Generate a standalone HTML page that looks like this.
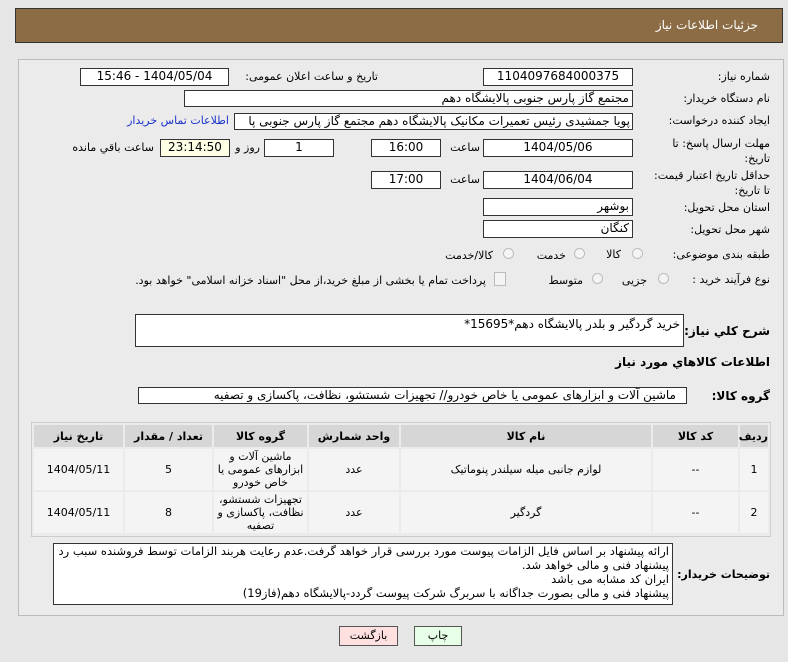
<!DOCTYPE html>
<html><head><meta charset="utf-8"><style>
body{margin:0;width:788px;height:662px;background:#e6e6e6;font-family:"DejaVu Sans","Liberation Sans",sans-serif;font-size:11px;color:#000;position:relative;overflow:hidden;direction:rtl}
.a{position:absolute;white-space:nowrap}
.b{position:absolute;background:#fff;border:1px solid #333;box-sizing:border-box;text-align:center;line-height:15px;font-size:12px;white-space:nowrap;overflow:hidden}
.l{position:absolute;white-space:nowrap;text-align:right}
.r{position:absolute;width:11px;height:11px;border-radius:50%;border:1px solid #bbb;background:#f4f4f4;box-sizing:border-box}
table{border-collapse:separate;border-spacing:2px;font-size:11px;white-space:normal}
td,th{text-align:center;padding:0}
th{background:#d6d6d6;height:22px;font-weight:bold}
td{background:#f4f4f4}
</style></head><body>
<div class="a" style="left:15px;top:8px;width:768px;height:35px;background:#8b6c45;border:1px solid #333;box-sizing:border-box"></div>
<div class="l" style="right:30px;top:18px;color:#fff;font-size:12px">جزئیات اطلاعات نیاز</div>
<div class="a" style="left:18px;top:59px;width:766px;height:557px;border:1px solid #bbb;background:#ebebeb;box-sizing:border-box"></div>

<div class="l" style="right:18px;top:70px">شماره نیاز:</div>
<div class="b" style="left:483px;top:68px;width:150px;height:18px">1104097684000375</div>
<div class="l" style="right:410px;top:70px">تاریخ و ساعت اعلان عمومی:</div>
<div class="b" style="left:80px;top:68px;width:149px;height:18px">1404/05/04 - 15:46</div>

<div class="l" style="right:18px;top:92px">نام دستگاه خریدار:</div>
<div class="b" style="left:184px;top:90px;width:449px;height:17px;text-align:right;padding-right:3px">مجتمع گاز پارس جنوبی  پالایشگاه دهم</div>

<div class="l" style="right:18px;top:114px">ایجاد کننده درخواست:</div>
<div class="b" style="left:234px;top:113px;width:399px;height:17px;text-align:right;padding-right:2px">پویا جمشیدی رئیس تعمیرات مکانیک پالایشگاه دهم  مجتمع گاز پارس جنوبی  پا</div>
<div class="l" style="right:559px;top:114px;color:#1a33cc">اطلاعات تماس خریدار</div>

<div class="l" style="right:18px;top:136px;line-height:15px">مهلت ارسال پاسخ: تا<br>تاریخ:</div>
<div class="b" style="left:483px;top:139px;width:150px;height:18px">1404/05/06</div>
<div class="l" style="right:308px;top:141px">ساعت</div>
<div class="b" style="left:371px;top:139px;width:70px;height:18px">16:00</div>
<div class="b" style="left:264px;top:139px;width:70px;height:18px">1</div>
<div class="l" style="right:528px;top:141px">روز و</div>
<div class="b" style="left:160px;top:139px;width:70px;height:18px;background:#ffffe6">23:14:50</div>
<div class="l" style="right:634px;top:141px">ساعت باقي مانده</div>

<div class="l" style="right:18px;top:168px;line-height:15px">حداقل تاریخ اعتبار قیمت:<br>تا تاریخ:</div>
<div class="b" style="left:483px;top:171px;width:150px;height:18px">1404/06/04</div>
<div class="l" style="right:308px;top:173px">ساعت</div>
<div class="b" style="left:371px;top:171px;width:70px;height:18px">17:00</div>

<div class="l" style="right:18px;top:201px">استان محل تحویل:</div>
<div class="b" style="left:483px;top:198px;width:150px;height:18px;text-align:right;padding-right:3px">بوشهر</div>
<div class="l" style="right:18px;top:223px">شهر محل تحویل:</div>
<div class="b" style="left:483px;top:220px;width:150px;height:18px;text-align:right;padding-right:3px">کنگان</div>

<div class="l" style="right:18px;top:248px">طبقه بندی موضوعی:</div>
<div class="r" style="left:632px;top:248px"></div><div class="l" style="right:167px;top:248px">کالا</div>
<div class="r" style="left:574px;top:248px"></div><div class="l" style="right:222px;top:249px">خدمت</div>
<div class="r" style="left:503px;top:248px"></div><div class="l" style="right:295px;top:249px">کالا/خدمت</div>

<div class="l" style="right:18px;top:273px">نوع فرآیند خرید :</div>
<div class="r" style="left:658px;top:273px"></div><div class="l" style="right:141px;top:274px">جزیی</div>
<div class="r" style="left:592px;top:273px"></div><div class="l" style="right:205px;top:274px">متوسط</div>
<div class="a" style="left:494px;top:272px;width:10px;height:12px;border:1px solid #bbb;background:#f4f4f4"></div>
<div class="l" style="right:302px;top:274px">پرداخت تمام یا بخشی از مبلغ خرید،از محل "اسناد خزانه اسلامی" خواهد بود.</div>

<div class="l" style="right:18px;top:324px;font-weight:bold;font-size:12px">شرح کلي نیاز:</div>
<div class="a" style="left:135px;top:314px;width:549px;height:33px;background:#fff;border:1px solid #333;box-sizing:border-box;text-align:right;padding:2px 3px;font-size:12px">خرید گردگیر و بلدر پالایشگاه دهم*15695*</div>
<div class="l" style="right:18px;top:355px;font-weight:bold;font-size:12px">اطلاعات کالاهاي مورد نیاز</div>
<div class="l" style="right:18px;top:389px;font-weight:bold;font-size:12px">گروه کالا:</div>
<div class="a" style="left:138px;top:387px;width:549px;height:17px;background:#fff;border:1px solid #333;box-sizing:border-box;text-align:right;padding-right:10px;line-height:15px;font-size:12px">ماشین آلات و ابزارهای عمومی یا خاص خودرو// تجهیزات شستشو، نظافت، پاکسازی و تصفیه</div>

<div class="a" style="left:31px;top:422px;width:740px;height:115px;border:1px solid #ccc;background:#ebebeb;box-sizing:border-box;white-space:normal">
<table style="width:738px;direction:rtl;table-layout:fixed">
<tr><th style="width:28px">ردیف</th><th style="width:85px">کد کالا</th><th style="width:250px">نام کالا</th><th style="width:90px">واحد شمارش</th><th style="width:93px">گروه کالا</th><th style="width:87px">تعداد / مقدار</th><th>تاریخ نیاز</th></tr>
<tr style="height:41px"><td>1</td><td>--</td><td>لوازم جانبی میله سیلندر پنوماتیک</td><td>عدد</td><td style="line-height:13px">ماشین آلات و ابزارهای عمومی یا خاص خودرو</td><td>5</td><td>1404/05/11</td></tr>
<tr style="height:41px"><td>2</td><td>--</td><td>گردگیر</td><td>عدد</td><td style="line-height:13px">تجهیزات شستشو، نظافت، پاکسازی و تصفیه</td><td>8</td><td>1404/05/11</td></tr>
</table></div>

<div class="l" style="right:18px;top:568px;font-weight:bold;font-size:11px">توضیحات خریدار:</div>
<div class="a" style="left:53px;top:543px;width:620px;height:62px;background:#fff;border:1px solid #333;box-sizing:border-box;text-align:right;padding:0 3px;line-height:14px;font-size:11.5px;white-space:normal">ارائه پیشنهاد بر اساس فایل الزامات پیوست مورد بررسی قرار خواهد گرفت.عدم رعایت هربند الزامات توسط فروشنده سبب رد پیشنهاد فنی و مالی خواهد شد.<br>ایران کد مشابه می باشد<br>پیشنهاد فنی و مالی بصورت جداگانه با سربرگ شرکت پیوست گردد-پالایشگاه دهم(فاز19)</div>

<div class="a" style="left:339px;top:626px;width:59px;height:20px;background:#ffe0e0;border:1px solid #555;box-sizing:border-box;text-align:center;line-height:18px">بازگشت</div>
<div class="a" style="left:414px;top:626px;width:48px;height:20px;background:#e6ffe6;border:1px solid #555;box-sizing:border-box;text-align:center;line-height:18px">چاپ</div>
</body></html>
